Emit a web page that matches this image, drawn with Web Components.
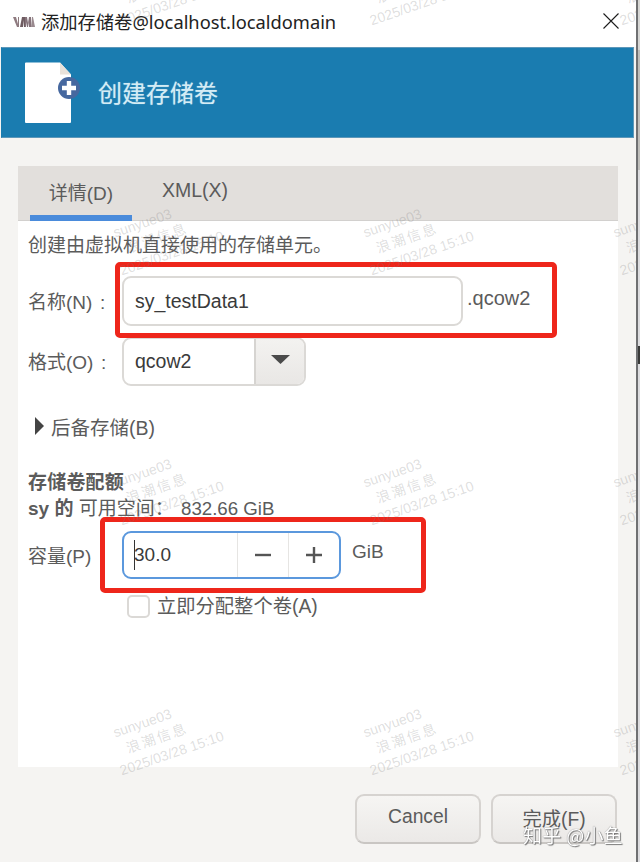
<!DOCTYPE html>
<html lang="zh">
<head>
<meta charset="utf-8">
<title>添加存储卷</title>
<style>
    html, body {
        margin: 0;
        height: 100%;
        overflow: hidden;
        background: linear-gradient(#d6d6d4 50px, #bfbebb 50px, #bfbebb 170px, #dcdcdf 170px);
        font-family: "Liberation Sans", "Noto Sans CJK SC", sans-serif;
    }

    .suffix {
        margin: -6px 0 0 4px;
        font-size: 20px;
    }

    .unit {
        margin: -6px 0 0 11px;
    }

    .free-size {
        margin-left: 2px;
        font-size: 18.7px;
    }

    .edge-mark {
        position: fixed;
        left: 638px;
        top: 346px;
        width: 2px;
        height: 18px;
        background: #3a3a3a;
    }
</style>
</head>
<body>
<vm-window>
    <vm-titlebar slot="title">添加存储卷@localhost.localdomain</vm-titlebar>
    <vm-banner slot="banner">创建存储卷</vm-banner>

    <vm-tabs slot="panel">
        <p class="desc">创建由虚拟机直接使用的存储单元。</p>

        <vm-row label="名称(N)  :" style="margin-top:19px">
            <vm-entry value="sy_testData1"></vm-entry>
            <span class="suffix">.qcow2</span>
        </vm-row>

        <vm-row label="格式(O)  :" style="margin-top:11px">
            <vm-combo value="qcow2"></vm-combo>
        </vm-row>

        <vm-expander style="margin-top:28px">后备存储(B)</vm-expander>

        <div class="quota-title">存储卷配额</div>
        <div class="quota-free"><b>sy 的</b> 可用空间： <span class="free-size">832.66 GiB</span></div>

        <vm-row label="容量(P)" style="margin-top:10px">
            <vm-spin value="30.0"></vm-spin>
            <span class="unit">GiB</span>
        </vm-row>

        <vm-check style="margin-top:16px">立即分配整个卷(A)</vm-check>
    </vm-tabs>

    <vm-button slot="actions">Cancel</vm-button>
    <vm-button slot="actions" drop>完成(F)</vm-button>

    <vm-callout slot="overlay" box="115,262,442,76"></vm-callout>
    <vm-callout slot="overlay" box="100,517,326,76"></vm-callout>
    <wm-stamps slot="overlay"></wm-stamps>
</vm-window>
<div class="edge-mark"></div>

<zh-mark>知乎 @小鱼</zh-mark>

<script>
const FONT = '"Liberation Sans", "Noto Sans CJK SC", sans-serif';

class VmWindow extends HTMLElement {
    constructor() {
        super();
        this.attachShadow({ mode: 'open' });
        this.shadowRoot.innerHTML = `
            <style>
            :host {
                display: flex;
                flex-direction: column;
                position: relative;
                box-sizing: border-box;
                width: 638px;
                height: 862px;
                overflow: hidden;
                background: #f5f4f2;
                border-right: 2px solid #6f7072;
            }

            .body {
                flex: 1;
                min-height: 0;
                display: flex;
                flex-direction: column;
                padding: 28px 18px 0 18px;
            }

            .actions {
                display: flex;
                justify-content: flex-end;
                gap: 10px;
                height: 95px;
                box-sizing: border-box;
                padding: 27px 1px 0 0;
            }

            ::slotted([slot="panel"]) {
                flex: 1;
                min-height: 0;
            }
            </style>

            <slot name="title"></slot>
            <slot name="banner"></slot>
            <div class="body">
                <slot name="panel"></slot>
                <div class="actions"><slot name="actions"></slot></div>
            </div>
            <slot name="overlay"></slot>
        `;
    }
}

class VmTitlebar extends HTMLElement {
    constructor() {
        super();
        this.attachShadow({ mode: 'open' });
        this.shadowRoot.innerHTML = `
            <style>
            :host {
                display: flex;
                align-items: center;
                height: 47px;
                flex: none;
                box-sizing: border-box;
                padding: 0 17px 5px 13px;
                background: #fff;
                color: #222;
                font: 18.3px "Noto Sans", "Noto Sans CJK SC", sans-serif;
            }

            .logo {
                width: 22px;
                height: 10px;
                margin: 2px 6px 0 0;
                flex: none;
            }

            .text {
                flex: 1;
                white-space: nowrap;
            }

            .close {
                width: 16px;
                height: 16px;
                flex: none;
            }
            </style>

            <svg class="logo" viewBox="0 0 22 10">
                <path d="M0 0h3l2 7V0h1v10H4z" fill="#8f7b80"/>
                <path d="M7 10l2-10h3v10h-1V3l-1 7z" fill="#6f5c62"/>
                <path d="M12 0h2l1 6 1-6h2v10h-2V5l-1 5h-1l-1-5v5h-1z" fill="#85727a"/>
                <path d="M18 10l1-10h1l2 10z" fill="#9a8a8f"/>
            </svg>
            <span class="text"><slot></slot></span>
            <svg class="close" viewBox="0 0 16 16">
                <path d="M.5.5l15 15M15.5.5l-15 15" stroke="#1c1c1c" stroke-width="1.1" fill="none"/>
            </svg>
        `;
    }
}

class VmBanner extends HTMLElement {
    constructor() {
        super();
        this.attachShadow({ mode: 'open' });
        this.shadowRoot.innerHTML = `
            <style>
            :host {
                display: flex;
                align-items: center;
                flex: none;
                box-sizing: border-box;
                height: 91px;
                margin: 0 2px 0 1px;
                padding-left: 23px;
                background: #1a7cb0;
                border: 1px solid #5d97b9;
                border-left-color: #1a7cb0;
                color: #d4ecf5;
                font: 24px ${FONT};
                text-shadow: 0 0 1px rgba(212, 236, 245, .6);
            }

            svg {
                width: 56px;
                height: 64px;
                margin-right: 17px;
                flex: none;
            }

            span {
                padding-bottom: 2px;
            }
            </style>

            <svg viewBox="0 0 56 64">
                <path d="M0 2.5a1 1 0 0 1 1-1h34l11 12v47.5a1 1 0 0 1-1 1H1a1 1 0 0 1-1-1z" fill="#fff"/>
                <path d="M35 1.5l11 12H35z" fill="#e9e2da"/>
                <circle cx="44" cy="27" r="11" fill="#46689f"/>
                <path d="M44 20v14M37 27h14" stroke="#fff" stroke-width="4.4"/>
            </svg>
            <span><slot></slot></span>
        `;
    }
}

class VmTabs extends HTMLElement {
    constructor() {
        super();
        this.attachShadow({ mode: 'open' });
        this.shadowRoot.innerHTML = `
            <style>
            :host {
                display: flex;
                flex-direction: column;
                background: #fff;
                color: #5b5b5b;
                font: 19px ${FONT};
            }

            .bar {
                display: flex;
                flex: none;
                height: 55px;
                box-sizing: border-box;
                padding-left: 12px;
                background: #e2dfdc;
                border-bottom: 1px solid #d2d0ce;
            }

            .tab {
                box-sizing: border-box;
                height: 55px;
                display: flex;
                justify-content: center;
                align-items: center;
                padding-top: 2px;
            }

            .active {
                width: 102px;
                border-bottom: 6px solid #4a8bdb;
            }

            .other {
                margin-left: 30px;
                padding: 0 0 7px;
                font-size: 19.5px;
            }

            .page {
                flex: 1;
                min-height: 0;
                display: flex;
                flex-direction: column;
                padding: 12px 0 0 10px;
            }

            ::slotted(.desc) {
                margin: 0;
                height: 24px;
                line-height: 26px;
                white-space: nowrap;
            }

            ::slotted(.quota-title) {
                margin-top: 33px;
                height: 24px;
                line-height: 24px;
                font-weight: bold;
                letter-spacing: .2px;
            }

            ::slotted(.quota-free) {
                margin-top: 2px;
                height: 24px;
                line-height: 24px;
                white-space: nowrap;
            }
            </style>

            <div class="bar">
                <div class="tab active">详情(D)</div>
                <div class="tab other">XML(X)</div>
            </div>
            <div class="page"><slot></slot></div>
        `;
    }
}

class VmRow extends HTMLElement {
    constructor() {
        super();
        this.attachShadow({ mode: 'open' });
        this.shadowRoot.innerHTML = `
            <style>
            :host {
                display: flex;
                align-items: center;
                flex: none;
            }

            .label {
                width: 94px;
                flex: none;
                padding-bottom: 2px;
                white-space: pre;
                word-spacing: -1.5px;
            }
            </style>

            <span class="label"></span>
            <slot></slot>
        `;
    }

    connectedCallback() {
        this.shadowRoot.querySelector('.label').textContent = this.getAttribute('label');
    }
}

class VmEntry extends HTMLElement {
    constructor() {
        super();
        this.attachShadow({ mode: 'open' });
        this.shadowRoot.innerHTML = `
            <style>
            :host {
                display: flex;
                align-items: center;
                box-sizing: border-box;
                width: 341px;
                height: 50px;
                padding: 0 11px;
                background: #fff;
                border: 2px solid #dbd9d6;
                border-radius: 9px;
                color: #3a3a3a;
                font-size: 19.5px;
            }
            </style>

            <span class="value"></span>
        `;
    }

    connectedCallback() {
        this.shadowRoot.querySelector('.value').textContent = this.getAttribute('value');
    }
}

class VmCombo extends HTMLElement {
    constructor() {
        super();
        this.attachShadow({ mode: 'open' });
        this.shadowRoot.innerHTML = `
            <style>
            :host {
                display: flex;
                box-sizing: border-box;
                width: 184px;
                height: 49px;
                background: #fff;
                border: 2px solid #dbd9d6;
                border-radius: 9px;
                overflow: hidden;
                color: #3a3a3a;
                font-size: 19.5px;
            }

            .value {
                flex: 1;
                display: flex;
                align-items: center;
                padding-left: 11px;
            }

            .button {
                width: 48px;
                display: flex;
                align-items: center;
                justify-content: center;
                background: linear-gradient(#f3f2f0, #e9e7e5);
                border-left: 2px solid #d6d4d1;
            }

            svg {
                width: 19px;
                height: 9px;
                margin-bottom: 4px;
            }
            </style>

            <span class="value"></span>
            <span class="button">
                <svg viewBox="0 0 19 9"><path d="M0 0h19L9.5 9z" fill="#4a4a4a"/></svg>
            </span>
        `;
    }

    connectedCallback() {
        this.shadowRoot.querySelector('.value').textContent = this.getAttribute('value');
    }
}

class VmExpander extends HTMLElement {
    constructor() {
        super();
        this.attachShadow({ mode: 'open' });
        this.shadowRoot.innerHTML = `
            <style>
            :host {
                display: flex;
                align-items: center;
                flex: none;
                height: 24px;
                padding-left: 7px;
                font-size: 19.5px;
            }

            svg {
                width: 9px;
                height: 18px;
                margin-right: 7px;
                flex: none;
            }
            </style>

            <svg viewBox="0 0 9 18"><path d="M0 0l9 9-9 9z" fill="#444"/></svg>
            <slot></slot>
        `;
    }
}

class VmSpin extends HTMLElement {
    constructor() {
        super();
        this.attachShadow({ mode: 'open' });
        this.shadowRoot.innerHTML = `
            <style>
            :host {
                display: flex;
                box-sizing: border-box;
                width: 219px;
                height: 48px;
                background: #fff;
                border: 2px solid #5b98dd;
                border-radius: 9px;
                color: #3a3a3a;
            }

            .value {
                flex: 1;
                display: flex;
                align-items: center;
                padding-left: 10px;
                position: relative;
            }

            .value::before {
                content: "";
                position: absolute;
                left: 10px;
                top: 7px;
                bottom: 7px;
                width: 1px;
                background: #333;
            }

            .step {
                width: 50px;
                display: flex;
                align-items: center;
                justify-content: center;
                border-left: 1px solid #e6e5e3;
            }

            svg {
                width: 16px;
                height: 16px;
            }
            </style>

            <span class="value"></span>
            <span class="step"><svg viewBox="0 0 16 16"><path d="M0 8h16" stroke="#555" stroke-width="2.4"/></svg></span>
            <span class="step"><svg viewBox="0 0 16 16"><path d="M0 8h16M8 0v16" stroke="#555" stroke-width="2.4"/></svg></span>
        `;
    }

    connectedCallback() {
        this.shadowRoot.querySelector('.value').textContent = this.getAttribute('value');
    }
}

class VmCheck extends HTMLElement {
    constructor() {
        super();
        this.attachShadow({ mode: 'open' });
        this.shadowRoot.innerHTML = `
            <style>
            :host {
                display: flex;
                align-items: center;
                flex: none;
                height: 22px;
                padding-left: 99px;
                font-size: 19.3px;
            }

            .box {
                box-sizing: border-box;
                width: 23px;
                height: 23px;
                margin-right: 7px;
                background: #fff;
                border: 2px solid #dbd9d6;
                border-radius: 5px;
                flex: none;
            }

            .text {
                padding-bottom: 2px;
            }
            </style>

            <span class="box"></span>
            <span class="text"><slot></slot></span>
        `;
    }
}

class VmButton extends HTMLElement {
    constructor() {
        super();
        this.attachShadow({ mode: 'open' });
        this.shadowRoot.innerHTML = `
            <style>
            :host {
                display: flex;
                align-items: center;
                justify-content: center;
                box-sizing: border-box;
                width: 126px;
                height: 50px;
                padding-bottom: 4px;
                background: linear-gradient(#f6f5f3, #ebe9e7);
                border: 2px solid #d6d3d0;
                border-bottom-color: #c9c6c3;
                border-radius: 9px;
                color: #5b5b5b;
                font: 19.3px ${FONT};
            }

            :host([drop]) {
                padding-bottom: 2px;
            }
            </style>

            <slot></slot>
        `;
    }
}

// red annotation frames that were painted over the screenshot
class VmCallout extends HTMLElement {
    constructor() {
        super();
        this.attachShadow({ mode: 'open' });
        this.shadowRoot.innerHTML = `
            <style>
            :host {
                position: absolute;
                box-sizing: border-box;
                border: 5px solid #ee261b;
                border-radius: 5px;
                pointer-events: none;
            }
            </style>
        `;
    }

    connectedCallback() {
        const [left, top, width, height] = this.getAttribute('box').split(',');
        this.style.left = `${left}px`;
        this.style.top = `${top}px`;
        this.style.width = `${width}px`;
        this.style.height = `${height}px`;
    }
}

class WmStamps extends HTMLElement {
    constructor() {
        super();
        this.attachShadow({ mode: 'open' });
        const stamp = `
            <div class="stamp">
                <span class="name">sunyue03</span><span class="org">浪潮信息</span><span class="date">2025/03/28 15:10</span>
            </div>
        `;
        this.shadowRoot.innerHTML = `
            <style>
            :host {
                position: absolute;
                inset: 0;
                pointer-events: none;
                display: grid;
                grid-template-columns: repeat(3, 250px);
                grid-auto-rows: 250px;
                margin: -137px 0 0 32px;
                color: rgba(120, 120, 120, .24);
                font: 14px ${FONT};
            }

            .stamp {
                display: flex;
                flex-direction: column;
                align-items: center;
                justify-content: center;
                line-height: 19px;
                white-space: nowrap;
                transform: rotate(-19deg);
            }

            .name {
                margin-right: 18px;
            }

            .org {
                letter-spacing: 2px;
            }

            .date {
                margin-left: 18px;
            }
            </style>
            ${stamp.repeat(12)}
        `;
    }
}

class ZhMark extends HTMLElement {
    constructor() {
        super();
        this.attachShadow({ mode: 'open' });
        this.shadowRoot.innerHTML = `
            <style>
            :host {
                position: fixed;
                left: 523px;
                top: 821px;
                color: #fff;
                font: 19px "Noto Sans CJK SC", sans-serif;
                letter-spacing: .3px;
                white-space: nowrap;
                text-shadow: 0 0 1px #666, 1px 1px 1px #777;
            }
            </style>

            <slot></slot>
        `;
    }
}

customElements.define('vm-window', VmWindow);
customElements.define('vm-titlebar', VmTitlebar);
customElements.define('vm-banner', VmBanner);
customElements.define('vm-tabs', VmTabs);
customElements.define('vm-row', VmRow);
customElements.define('vm-entry', VmEntry);
customElements.define('vm-combo', VmCombo);
customElements.define('vm-expander', VmExpander);
customElements.define('vm-spin', VmSpin);
customElements.define('vm-check', VmCheck);
customElements.define('vm-button', VmButton);
customElements.define('vm-callout', VmCallout);
customElements.define('wm-stamps', WmStamps);
customElements.define('zh-mark', ZhMark);
</script>
</body>
</html>
